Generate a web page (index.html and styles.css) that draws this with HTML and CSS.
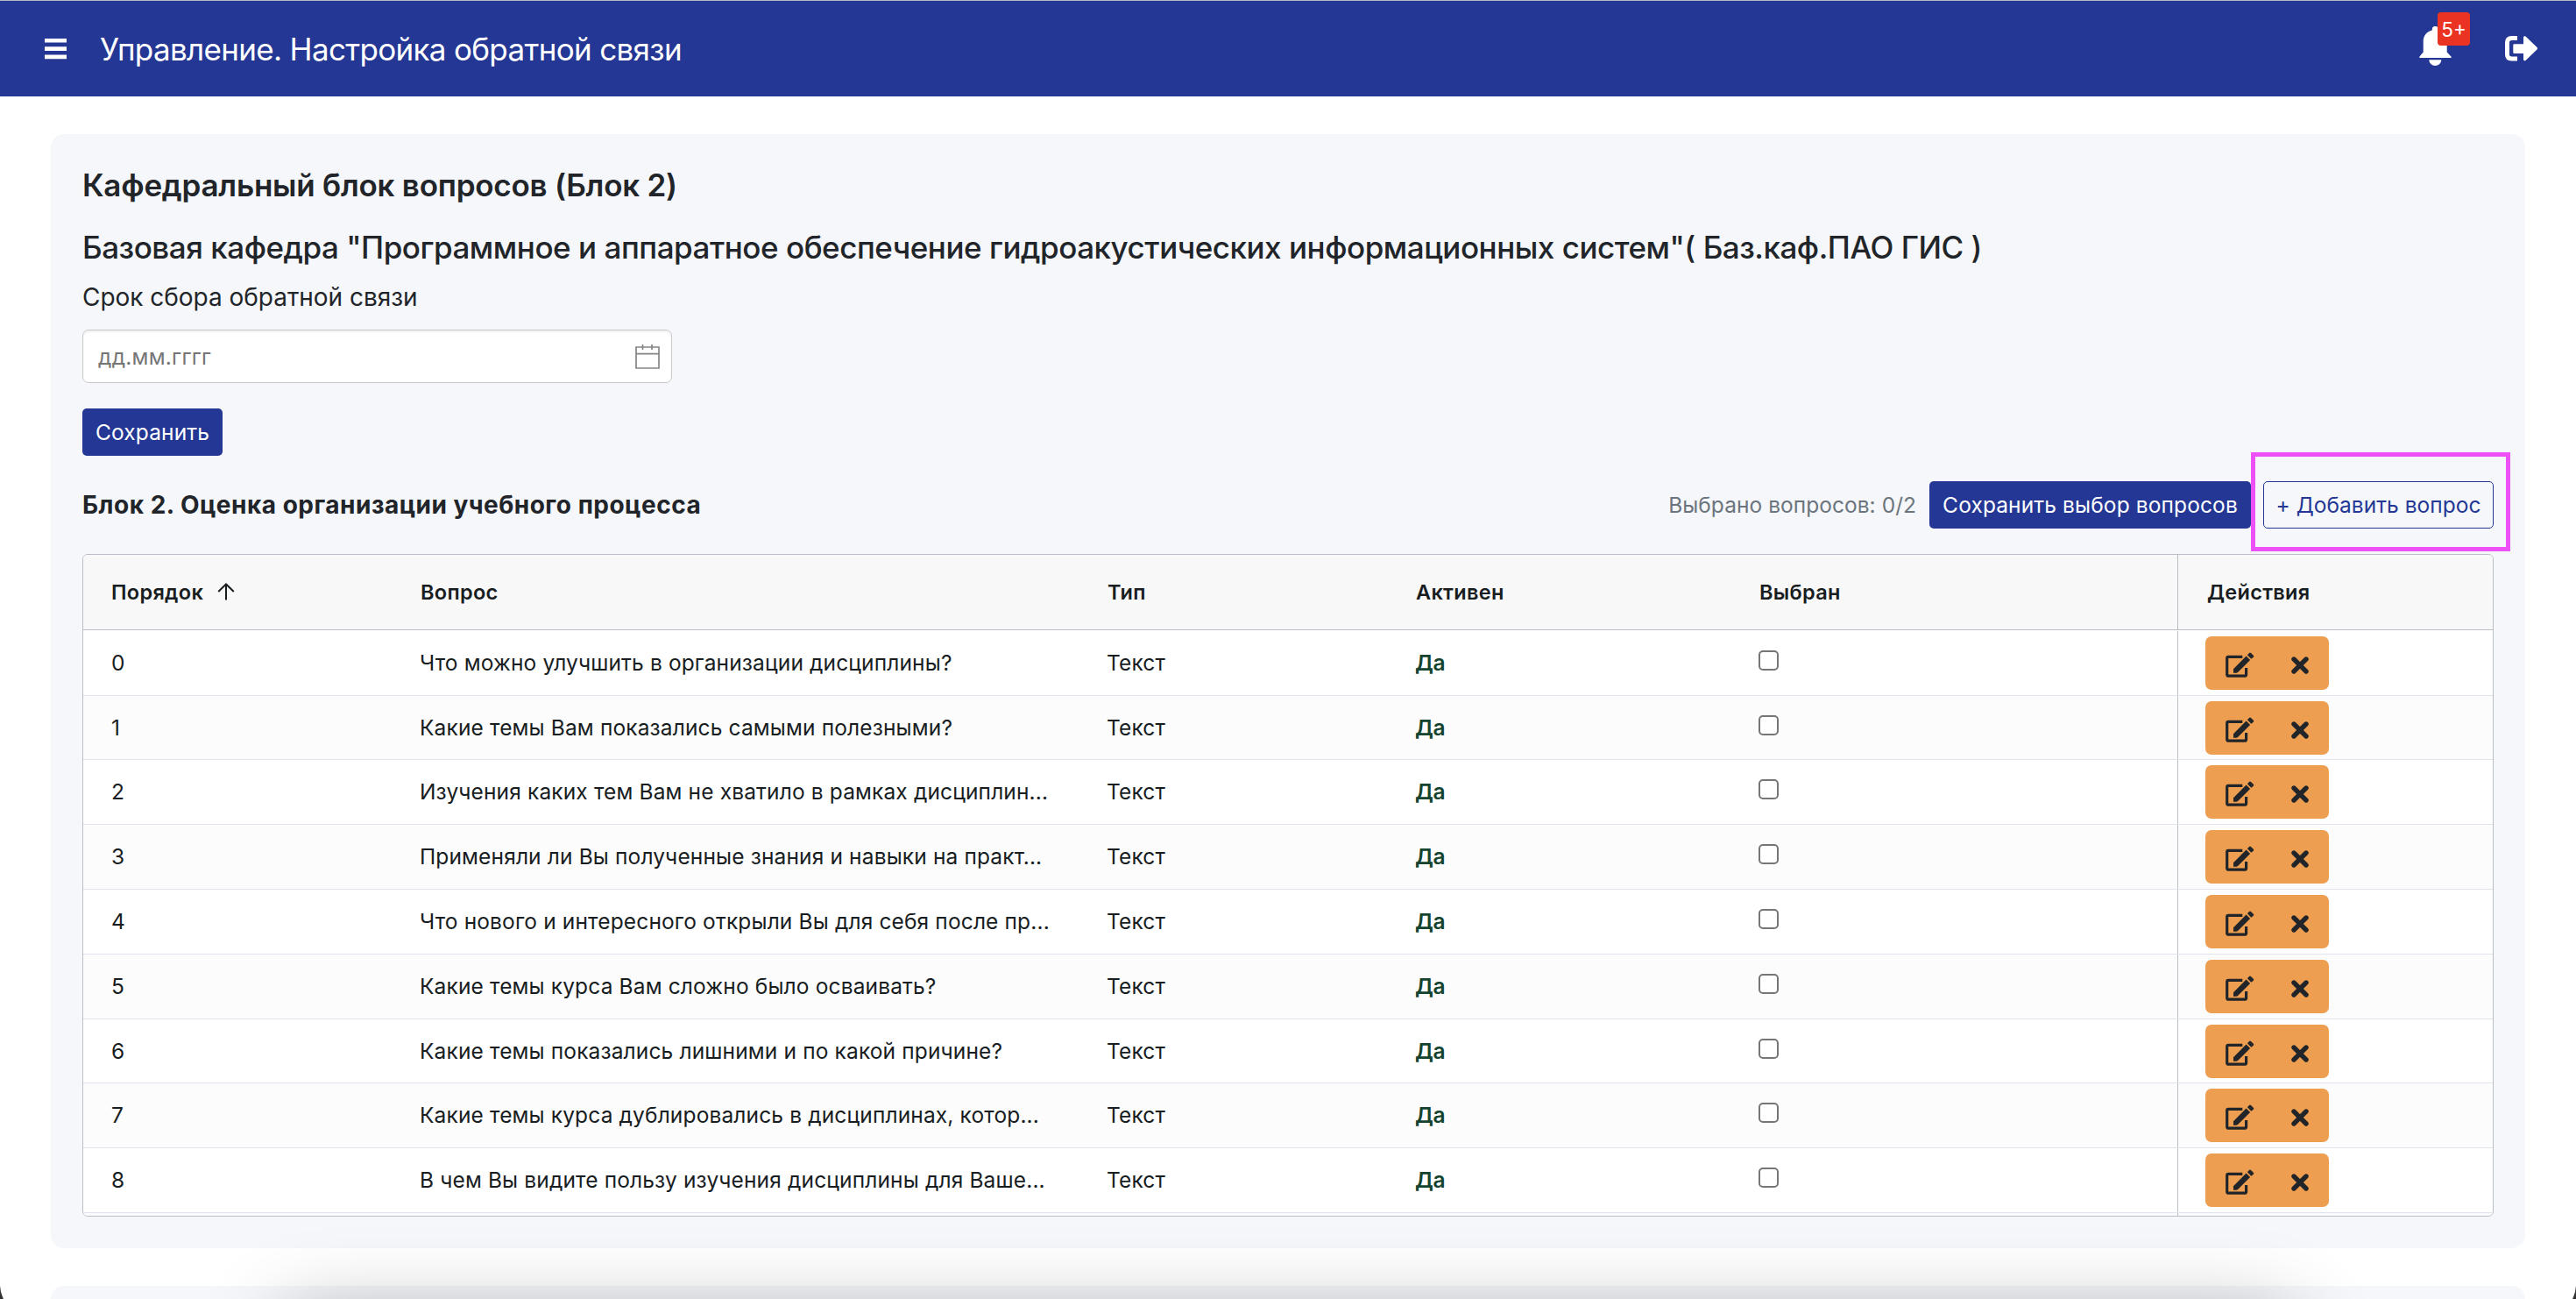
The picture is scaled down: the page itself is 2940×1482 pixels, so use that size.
FILE: index.html
```html
<!DOCTYPE html>
<html lang="ru">
<head>
<meta charset="utf-8">
<title>Управление. Настройка обратной связи</title>
<link rel="stylesheet" href="styles.css">
</head>
<body>
<svg class="sprite" aria-hidden="true">
  <symbol id="edit" viewBox="0 0 33 30">
    <path d="M19.3 5.3H3.2a1.5 1.5 0 0 0-1.5 1.5v18.9a1.5 1.5 0 0 0 1.5 1.5h18.9a1.5 1.5 0 0 0 1.5-1.5V18" fill="none" stroke="currentColor" stroke-width="3.2"/>
    <path d="M9 23.8v-4.6L23.6 4.4l4.5 4.6-14.3 14.3-1.6.5zM24.9 3.2 27 1q1-1 2 0l2.8 2.8q1 1 0 2L29.3 7.8z" fill="currentColor"/>
  </symbol>
  <symbol id="remove" viewBox="0 0 20 20">
    <path d="M3 3l14 14M17 3 3 17" fill="none" stroke="currentColor" stroke-width="5.4" stroke-linecap="round"/>
  </symbol>
</svg>

<header class="topbar">
  <svg class="burger" viewBox="0 0 25 24"><path d="M0 0h25v4.6H0zM0 9.3h25v4.6H0zM0 18.6h25v4.6H0z" fill="currentColor"/></svg>
  <div class="topbar-title">Управление. Настройка обратной связи</div>
  <div class="bell">
    <svg viewBox="0 0 37 45"><path d="M14.8 4.6V3.4a3.5 3.5 0 0 1 7 0v1.2C28 6 31.7 11 31.7 17v12.6L36 34q1 1 .6 2H.4q-.5-1 .5-2l3.8-4.4V17C4.7 11 8.5 6 14.8 4.6zM11.3 38.3h14a7 6.7 0 0 1-14 0z" fill="currentColor"/></svg>
    <span class="badge">5+</span>
  </div>
  <svg class="exit" viewBox="0 0 37 29"><path d="M14 0v5H7.5Q5 5 5 7.500v13.500q0 2.500 2.500 2.500H14v5H7.500Q0 28.500 0 21V7.500Q0 0 7.500 0zM10.500 9.300H21V1.500Q21.500-.5 23.500.5L36.500 13q1 1.200 0 2.400L23.500 28Q21.500 29 21 27V20H10.500Q9.300 20 9.300 18.800V10.500Q9.300 9.300 10.500 9.300z" fill="currentColor"/></svg>
</header>

<main class="content">
  <section class="card">
    <h1 class="card-title">Кафедральный блок вопросов (Блок 2)</h1>
    <h2 class="department">Базовая кафедра "Программное и аппаратное обеспечение гидроакустических информационных систем"( Баз.каф.ПАО ГИС )</h2>
    <div class="field-label">Срок сбора обратной связи</div>
    <div class="date-input">
      <span class="placeholder">дд.мм.гггг</span>
      <svg class="calendar" viewBox="0 0 28 28"><path d="M1 3h26v24H1zM1 10.700h26M8.500 0v6M19 0v6" fill="none" stroke="currentColor" stroke-width="1.700"/></svg>
    </div>
    <button class="btn btn-save">Сохранить</button>

    <div class="toolbar">
      <h3 class="block-title">Блок 2. Оценка организации учебного процесса</h3>
      <span class="counter">Выбрано вопросов: 0/2</span>
      <button class="btn btn-choice">Сохранить выбор вопросов</button>
      <div class="add">
        <button class="btn btn-outline">+ Добавить вопрос</button>
        <div class="highlight"></div>
      </div>
    </div>

    <div class="table">
      <div class="row head">
        <div class="cell sorted">Порядок <svg class="arrow" viewBox="0 0 20 20"><path d="M10 19.500V1.500M1.200 10 10 1.500l8.800 8.500" fill="none" stroke="currentColor" stroke-width="2"/></svg></div>
        <div class="cell">Вопрос</div><div class="cell">Тип</div><div class="cell">Активен</div><div class="cell">Выбран</div><div class="cell pinned">Действия</div>
      </div>
      <div class="row"><div class="cell">0</div><div class="cell">Что можно улучшить в организации дисциплины?</div><div class="cell">Текст</div><div class="cell yes">Да</div><div class="cell"><span class="check"></span></div><div class="cell pinned"><span class="actions"><svg class="edit"><use href="#edit"/></svg><svg class="remove"><use href="#remove"/></svg></span></div></div>
      <div class="row"><div class="cell">1</div><div class="cell">Какие темы Вам показались самыми полезными?</div><div class="cell">Текст</div><div class="cell yes">Да</div><div class="cell"><span class="check"></span></div><div class="cell pinned"><span class="actions"><svg class="edit"><use href="#edit"/></svg><svg class="remove"><use href="#remove"/></svg></span></div></div>
      <div class="row"><div class="cell">2</div><div class="cell">Изучения каких тем Вам не хватило в рамках дисциплин...</div><div class="cell">Текст</div><div class="cell yes">Да</div><div class="cell"><span class="check"></span></div><div class="cell pinned"><span class="actions"><svg class="edit"><use href="#edit"/></svg><svg class="remove"><use href="#remove"/></svg></span></div></div>
      <div class="row"><div class="cell">3</div><div class="cell">Применяли ли Вы полученные знания и навыки на практ...</div><div class="cell">Текст</div><div class="cell yes">Да</div><div class="cell"><span class="check"></span></div><div class="cell pinned"><span class="actions"><svg class="edit"><use href="#edit"/></svg><svg class="remove"><use href="#remove"/></svg></span></div></div>
      <div class="row"><div class="cell">4</div><div class="cell">Что нового и интересного открыли Вы для себя после пр...</div><div class="cell">Текст</div><div class="cell yes">Да</div><div class="cell"><span class="check"></span></div><div class="cell pinned"><span class="actions"><svg class="edit"><use href="#edit"/></svg><svg class="remove"><use href="#remove"/></svg></span></div></div>
      <div class="row"><div class="cell">5</div><div class="cell">Какие темы курса Вам сложно было осваивать?</div><div class="cell">Текст</div><div class="cell yes">Да</div><div class="cell"><span class="check"></span></div><div class="cell pinned"><span class="actions"><svg class="edit"><use href="#edit"/></svg><svg class="remove"><use href="#remove"/></svg></span></div></div>
      <div class="row"><div class="cell">6</div><div class="cell">Какие темы показались лишними и по какой причине?</div><div class="cell">Текст</div><div class="cell yes">Да</div><div class="cell"><span class="check"></span></div><div class="cell pinned"><span class="actions"><svg class="edit"><use href="#edit"/></svg><svg class="remove"><use href="#remove"/></svg></span></div></div>
      <div class="row"><div class="cell">7</div><div class="cell">Какие темы курса дублировались в дисциплинах, котор...</div><div class="cell">Текст</div><div class="cell yes">Да</div><div class="cell"><span class="check"></span></div><div class="cell pinned"><span class="actions"><svg class="edit"><use href="#edit"/></svg><svg class="remove"><use href="#remove"/></svg></span></div></div>
      <div class="row"><div class="cell">8</div><div class="cell">В чем Вы видите пользу изучения дисциплины для Ваше...</div><div class="cell">Текст</div><div class="cell yes">Да</div><div class="cell"><span class="check"></span></div><div class="cell pinned"><span class="actions"><svg class="edit"><use href="#edit"/></svg><svg class="remove"><use href="#remove"/></svg></span></div></div>
      <div class="row tail"><div class="pinned"></div></div>
    </div>
  </section>
  <section class="card next-card"></section>
</main>

<div class="overlay">
  <div class="dock-shadow"></div>
  <div class="corner corner-left"></div>
  <div class="corner corner-right"></div>
</div>
</body>
</html>
```
FILE: styles.css
```css
* { box-sizing: border-box; }

body {
  margin: 0;
  height: 1482px;
  overflow: hidden;
  background: #fff;
  color: #212529;
  font-family: Inter, "Noto Sans", sans-serif;
}

h1, h2, h3 { margin: 0; }
svg { display: block; flex: none; }
.sprite { position: absolute; width: 0; height: 0; }

/* Top bar */
.topbar {
  display: flex;
  align-items: center;
  height: 110px;
  padding: 0 44px 0 51px;
  background: #243794;
  border-top: 1px solid #b4b9c4;
  color: #fff;
}
.burger { width: 25px; height: 24px; margin-top: 1px; }
.topbar-title {
  flex: 1;
  margin-left: 38px;
  font-size: 35px;
  line-height: 44px;
  letter-spacing: -0.67px;
}
.bell { position: relative; width: 37px; height: 45px; margin-right: 61px; margin-bottom: 6px; }
.bell svg { width: 37px; height: 45px; }
.badge {
  position: absolute;
  left: 21px;
  top: -16px;
  width: 37px;
  height: 38px;
  border-radius: 4px;
  background: #ea3323;
  font-size: 22.5px;
  line-height: 39px;
  text-align: center;
}
.exit { width: 37px; height: 29px; }

/* Cards */
.content { padding: 43px 58px 0; }
.card {
  display: flex;
  flex-direction: column;
  align-items: stretch;
  height: 1271px;
  padding: 36px;
  border-radius: 15px;
  background: #f5f7fb;
}
.next-card { height: 60px; margin-top: 43px; padding: 0; }

.card-title { font-size: 35px; line-height: 44px; font-weight: 600; letter-spacing: -0.24px; }
.department {
  margin-top: 27px;
  font-size: 35px;
  line-height: 44px;
  font-weight: 500;
  letter-spacing: -0.47px;
  white-space: nowrap;
}
.field-label { margin-top: 13px; font-size: 28px; line-height: 44px; letter-spacing: -0.03px; }
.date-input {
  display: flex;
  align-items: center;
  justify-content: space-between;
  width: 673px;
  height: 61px;
  margin-top: 15px;
  padding: 0 13px 0 17px;
  border: 1px solid #c9c9c9;
  border-radius: 7px;
  background: #fff;
  box-shadow: inset 0 2px 2px rgba(0, 0, 0, 0.06);
}
.placeholder { color: #757575; font-size: 24.5px; letter-spacing: 0.25px; }
.calendar { width: 28px; height: 28px; color: #858585; }

.btn {
  height: 54px;
  padding: 0;
  border: 0;
  border-radius: 5px;
  background: #243794;
  color: #fff;
  font: 24.5px/54px Inter, "Noto Sans", sans-serif;
  letter-spacing: 0.12px;
  text-align: center;
  white-space: nowrap;
}
.btn-save { width: 160px; margin-top: 29px; }
.btn-choice { width: 367px; margin-left: 15px; }
.btn-outline {
  display: block;
  width: 263px;
  border: 1px solid #243794;
  background: transparent;
  color: #243794;
  line-height: 52px;
  letter-spacing: 0.03px;
}

.toolbar { display: flex; align-items: center; height: 54px; margin-top: 29px; }
.block-title { flex: 1; font-size: 28px; line-height: 54px; font-weight: 700; letter-spacing: 0.5px; }
.counter { color: #6c757d; font-size: 24.5px; letter-spacing: 0.04px; }
.add { position: relative; margin-left: 14px; }
.highlight {
  position: absolute;
  left: -14px;
  top: -33px;
  width: 296px;
  height: 113px;
  border: 5px solid #ee50f8;
}

/* Questions table */
.table {
  height: 756px;
  margin-top: 29px;
  overflow: hidden;
  border: 1px solid #babfc7;
  border-radius: 6px;
  background: #fff;
  color: #181d1f;
}
.row {
  display: grid;
  grid-template-columns: 352px 784px 352px 392px 510px 1fr;
  height: 73.8px;
  border-bottom: 1px solid #e2e4ed;
}
.row:nth-child(odd) { background: #fcfcfc; }
.cell {
  padding-left: 32px;
  font-size: 24.5px;
  line-height: 72.8px;
  letter-spacing: 0.14px;
  white-space: nowrap;
}
.pinned { border-left: 1px solid #babfc7; }
.row .pinned { padding-left: 31px; }
.row.head {
  height: 86px;
  border-bottom-color: #babfc7;
  background: #f8f8f8;
}
.head + .row { height: 74.6px; padding-top: 0.8px; }
.head .cell {
  padding-left: 33px;
  font-size: 23.5px;
  line-height: 85px;
  font-weight: 600;
  letter-spacing: 0.3px;
}
.head .cell.sorted { display: flex; align-items: center; padding-left: 32px; }
.arrow { width: 20px; height: 20px; margin: 0 0 2px 16px; }
.yes { color: #14442f; font-weight: 600; letter-spacing: -0.4px; }
.row.tail { height: 4px; border: 0; background: #fafbfd; }
.tail .pinned { grid-column: 6; }

.check {
  display: block;
  width: 23px;
  height: 23px;
  margin-top: 22px;
  border: 2px solid #767676;
  border-radius: 5px;
  background: #fff;
}
.actions {
  display: flex;
  width: 141px;
  height: 61px;
  margin-top: 6px;
  padding: 0 23px;
  border-radius: 7px;
  background: #ed9e50;
  color: #212529;
  justify-content: space-between;
}
.edit { width: 33px; height: 30px; margin-top: 18px; }
.remove { width: 20px; height: 20px; margin-top: 23px; }

/* Shade and rounded corners along the lower window edge */
.overlay { position: fixed; inset: 0; overflow: hidden; pointer-events: none; }
.dock-shadow {
  position: absolute;
  left: 325px;
  right: 325px;
  top: 1501px;
  height: 300px;
  box-shadow: 0 0 88px rgba(0, 0, 0, 0.3);
}
.corner {
  position: absolute;
  bottom: 0;
  width: 4px;
  height: 15px;
  background: #333;
}
.corner-left { left: 0; clip-path: polygon(0 0, 25% 45%, 60% 75%, 100% 100%, 0 100%); }
.corner-right { right: 0; clip-path: polygon(100% 0, 75% 45%, 40% 75%, 0 100%, 100% 100%); }
```
